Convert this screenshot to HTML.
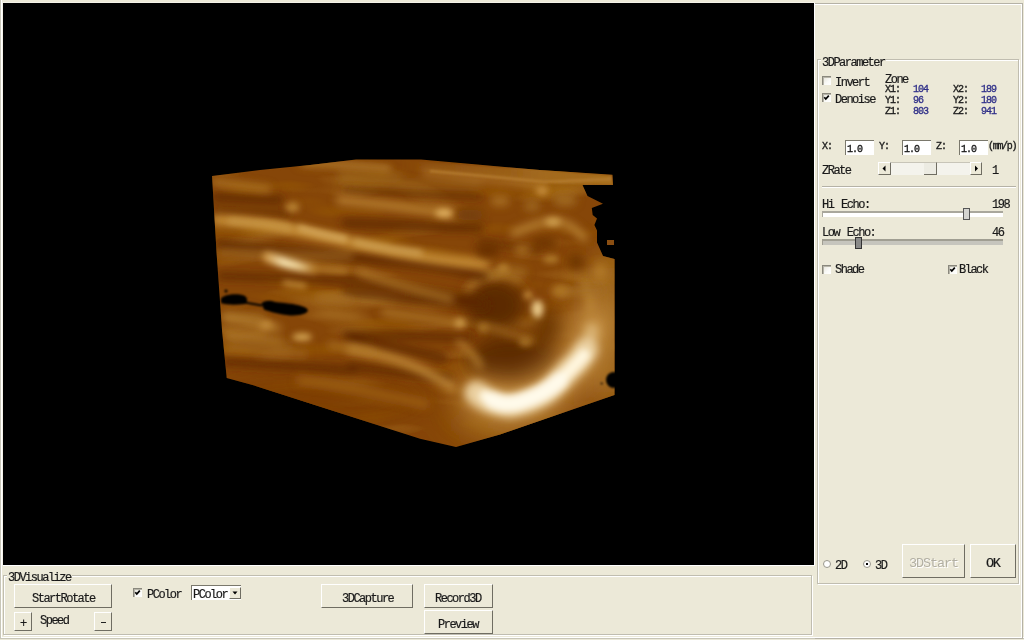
<!DOCTYPE html>
<html><head><meta charset="utf-8">
<style>
*{margin:0;padding:0;box-sizing:border-box}
html,body{width:1024px;height:640px;overflow:hidden;background:#ECE9D8;position:relative}
.a{position:absolute}
.t{position:absolute;font-family:"Liberation Mono",monospace;font-size:12px;line-height:12px;letter-spacing:-1.5px;white-space:nowrap;color:#1a1a1a;-webkit-text-stroke:0.2px #1a1a1a}
.s{position:absolute;font-family:"Liberation Mono",monospace;font-size:10px;line-height:10px;letter-spacing:-1.0px;white-space:nowrap;color:#1a1a1a;-webkit-text-stroke:0.35px #1a1a1a}
.n{color:#2e2e88;-webkit-text-stroke:0.3px #2e2e88}
.btn{position:absolute;background:#ECE9D8;border-top:1px solid #fff;border-left:1px solid #fff;border-right:1px solid #6f6d62;border-bottom:1px solid #6f6d62}
.gb{position:absolute;border:1px solid #c0bdb0;box-shadow:1px 1px 0 #fff inset, 1px 1px 0 #fff}
.gt{background:#ECE9D8;padding:0 1px}
.cb{position:absolute;width:9px;height:9px;background:linear-gradient(135deg,#e4e2d8,#fbfbf8 60%,#fff);border-top:1px solid #8a887d;border-left:1px solid #8a887d;box-shadow:inset 1px 1px 0 #b8b6aa}
.t,.s{will-change:transform}
.tb{position:absolute;background:#fff;border-top:1px solid #7a786c;border-left:1px solid #7a786c}
</style></head><body>
<div class="a" style="left:0;top:0;width:1024px;height:639px;border-left:1px solid #c8c6b8;border-bottom:1px solid #c8c6b8;box-shadow:inset 1px -1px 0 #fff"></div>
<div class="a" style="left:2px;top:2px;width:813px;height:564px;background:#fff;border-top:1px solid #f4f2e8;border-left:1px solid #f4f2e8"></div>
<div class="a" style="left:3px;top:3px;width:811px;height:562px;background:#000;overflow:hidden">
<svg width="811" height="562" viewBox="3 3 811 562" style="position:absolute;left:0;top:0">
<defs>
<clipPath id="cp"><path d="M212,176 L260,170 L310,165 L356,159.4 L421,159.4 L480,164.8 L540,170 L612.5,174.8 L613,185 L582.5,185 L587.5,196 L603,203.7 L591.8,208 L592.7,215 L597,218.4 L594.4,225 L597,230.4 L597,242.5 L603,256 L614.5,259 L614.5,395 L500,434.5 L456,447 L420,438.7 L252.5,385 L226.7,378 L222,330 L216.7,255 Z"/></clipPath>
<filter id="b1" x="-50%" y="-50%" width="200%" height="200%"><feGaussianBlur stdDeviation="1.2"/></filter>
<filter id="b2" x="-50%" y="-50%" width="200%" height="200%"><feGaussianBlur stdDeviation="3"/></filter>
<filter id="b4" x="-50%" y="-50%" width="200%" height="200%"><feGaussianBlur stdDeviation="4.2"/></filter>
<filter id="b8" x="-50%" y="-50%" width="200%" height="200%"><feGaussianBlur stdDeviation="8"/></filter>
<filter id="b14" x="-50%" y="-50%" width="200%" height="200%"><feGaussianBlur stdDeviation="14"/></filter>
<filter id="texL" x="0" y="0" width="100%" height="100%" filterUnits="userSpaceOnUse"><feTurbulence type="fractalNoise" baseFrequency="0.01 0.045" numOctaves="2" seed="7" result="n0"/><feGaussianBlur in="n0" stdDeviation="2" result="n"/><feColorMatrix in="n" type="matrix" values="0 0 0 0 0.74  0 0 0 0 0.46  0 0 0 0 0.08  3 0 0 0 -1.6"/></filter>
<filter id="texD" x="0" y="0" width="100%" height="100%" filterUnits="userSpaceOnUse"><feTurbulence type="fractalNoise" baseFrequency="0.012 0.05" numOctaves="2" seed="11" result="n0"/><feGaussianBlur in="n0" stdDeviation="2" result="n"/><feColorMatrix in="n" type="matrix" values="0 0 0 0 0.36  0 0 0 0 0.13  0 0 0 0 0.0  3 0 0 0 -1.6"/></filter>
<linearGradient id="rib" x1="400" y1="0" x2="613" y2="0" gradientUnits="userSpaceOnUse"><stop offset="0" stop-color="#A26A20" stop-opacity="0"/><stop offset="0.4" stop-color="#A26A20" stop-opacity="0.6"/><stop offset="1" stop-color="#A8701F"/></linearGradient>
<linearGradient id="gD" x1="265" y1="0" x2="316" y2="0" gradientUnits="userSpaceOnUse"><stop offset="0" stop-color="#C89040"/><stop offset="0.35" stop-color="#F6E2B0"/><stop offset="0.6" stop-color="#EED49A"/><stop offset="1" stop-color="#B88030"/></linearGradient>
</defs>
<g clip-path="url(#cp)">
<rect x="200" y="150" width="430" height="310" fill="#864608"/>
<rect x="200" y="150" width="430" height="310" fill="#fff" filter="url(#texL)" opacity="0.4"/>
<rect x="200" y="150" width="430" height="310" fill="#fff" filter="url(#texD)" opacity="0.5"/>
<!-- large soft tonal areas -->
<g filter="url(#b14)">
<rect x="590" y="255" width="40" height="150" fill="#A26A22"/>


<ellipse cx="520" cy="425" rx="70" ry="18" fill="#9A6018"/>
<ellipse cx="320" cy="400" rx="110" ry="22" fill="#7A3C06" opacity="0.8"/>

</g>
<g filter="url(#b8)">
<ellipse cx="495" cy="305" rx="30" ry="26" fill="#5C2A04"/>
<ellipse cx="513" cy="360" rx="46" ry="24" fill="#5C2A04"/>
<ellipse cx="548" cy="330" rx="14" ry="22" fill="#6A3406"/>
</g>
<g filter="url(#b4)" fill="none" stroke-linecap="round">
<path d="M468,290 C475,276 495,270 520,280" stroke="#B07A2C" stroke-width="6"/>
<path d="M482,326 C500,330 520,336 533,341" stroke="#A87024" stroke-width="5"/>
<path d="M585,285 C590,295 592,305 590,312" stroke="#B07A2C" stroke-width="9"/>
</g>
<!-- dark bands -->
<g filter="url(#b4)" fill="none" stroke-linecap="round" stroke="#5C2802">
<path d="M215,197 L280,200" stroke-width="7"/>
<path d="M215,211 L290,214" stroke-width="4"/>
<path d="M220,245 C280,250 340,256 400,262 S460,272 485,276" stroke-width="8"/>
<path d="M345,223 L480,228" stroke-width="7"/>
<path d="M345,190 L480,196" stroke-width="4"/>
<path d="M220,276 L350,280 L480,300" stroke-width="6"/>
<path d="M345,292 L485,306" stroke-width="7"/>
<path d="M345,334 L470,338" stroke-width="6"/>
<path d="M350,340 C380,345 420,352 444,358" stroke-width="7"/>
<path d="M350,366 C380,370 420,375 450,379" stroke-width="6"/>
<path d="M225,362 L355,370" stroke-width="6"/>
<path d="M480,242 L540,250" stroke-width="6" opacity="0.6"/>
</g>
<!-- light streaks -->
<g filter="url(#b4)" fill="none" stroke-linecap="round">
<path d="M214,182 L268,189" stroke="#B07828" stroke-width="6"/>
<path d="M300,164 L387,170" stroke="#A87024" stroke-width="4"/>
<path d="M340,174 L400,176" stroke="#A06C20" stroke-width="4"/>
<path d="M424,172 L545,186" stroke="#C08838" stroke-width="4"/>
<path d="M340,181 L480,186" stroke="#9E6A1E" stroke-width="4"/>
<path d="M216,220 C240,221 267,223.7 298.7,231.6 C320,236 360,244 392,251 S460,262 485,264" stroke="#C89038" stroke-width="10"/>
<path d="M340,200 C370,203 400,206 452,214" stroke="#B88030" stroke-width="8"/>
<path d="M360,272 C380,280 415,290 451,299" stroke="#B07A2C" stroke-width="6"/>
<path d="M384,312 C410,316 440,320 462,324" stroke="#B07A2C" stroke-width="6"/>
<path d="M514,233 C530,226 545,221 553,221 C565,221 575,228 584,238" stroke="#B88236" stroke-width="7"/>
<path d="M225,316 L262,318" stroke="#A87428" stroke-width="6"/>
<path d="M226,334 L265,333" stroke="#B07A2C" stroke-width="5"/>
<path d="M350,349 C380,354 410,362 431,375 C440,380 446,384 452,387" stroke="#C08A3A" stroke-width="8"/>
<path d="M459,343 C470,350 476,358 480,366" stroke="#B88232" stroke-width="6"/>
<path d="M220,253 L350,256" stroke="#9E6820" stroke-width="6"/>
<path d="M319,297 L350,300" stroke="#A87226" stroke-width="5"/>
<path d="M490,277 C500,270 515,268 525,272" stroke="#A87428" stroke-width="5"/>
<path d="M230,342 L290,345" stroke="#A06C22" stroke-width="4"/>
<path d="M560,292 L600,290" stroke="#A06A22" stroke-width="8"/>
</g>
<g filter="url(#b2)">
<ellipse cx="292.5" cy="207.3" rx="7" ry="5" fill="#B88232"/>
<ellipse cx="444" cy="213" rx="9" ry="4" fill="#E0B060"/>
<ellipse cx="542" cy="191" rx="6" ry="4" fill="#C89040"/>
<ellipse cx="553" cy="222" rx="8" ry="4" fill="#D0A050"/>
<path d="M267,257 C278,261 290,265 314,269" stroke="url(#gD)" stroke-width="10" fill="none" stroke-linecap="round"/>
<path d="M310,269 L345,271" stroke="#B07828" stroke-width="5" fill="none" stroke-linecap="round"/>
<path d="M285,283 L304,286" stroke="#C08A3A" stroke-width="5" fill="none" stroke-linecap="round"/>
<ellipse cx="266" cy="325" rx="7" ry="4" fill="#C89040"/>
<ellipse cx="302" cy="337" rx="10" ry="4" fill="#D0A050"/>
<path d="M300,228 C315,233 330,236 345,239" stroke="#D8AC60" stroke-width="6" fill="none" stroke-linecap="round"/>
<path d="M355,242 C375,247 395,250 420,253" stroke="#D0A458" stroke-width="5" fill="none" stroke-linecap="round"/>
<path d="M230,221 C250,222 270,224 290,228" stroke="#C89848" stroke-width="5" fill="none" stroke-linecap="round"/>
<path d="M305,163 C330,163 360,165 390,168" stroke="#B88434" stroke-width="3" fill="none" stroke-linecap="round"/>
<ellipse cx="460" cy="323" rx="5" ry="4" fill="#D0A050"/>
<ellipse cx="537.5" cy="309" rx="6" ry="9" fill="#E8C888"/>
<ellipse cx="528" cy="295" rx="4" ry="4" fill="#C89040"/>
<ellipse cx="503" cy="268" rx="6" ry="4" fill="#B88232"/>
<ellipse cx="551" cy="259" rx="8" ry="4" fill="#B07a2c"/>
<ellipse cx="483" cy="328" rx="5" ry="4" fill="#A87428"/>
<ellipse cx="525" cy="342" rx="6" ry="4" fill="#A87428"/>
</g>
<g filter="url(#b4)">
<ellipse cx="500" cy="201" rx="10" ry="5" fill="#A87024"/>
<ellipse cx="532" cy="206" rx="8" ry="5" fill="#A06A20"/>
<ellipse cx="565" cy="200" rx="12" ry="6" fill="#A06A20"/>
<ellipse cx="600" cy="272" rx="7" ry="9" fill="#B07828"/>
<ellipse cx="560" cy="291" rx="9" ry="6" fill="#B07828"/>
<ellipse cx="522" cy="250" rx="8" ry="5" fill="#A87024"/>
<ellipse cx="595" cy="330" rx="10" ry="14" fill="#B07A2C"/>
<ellipse cx="488" cy="250" rx="12" ry="8" fill="#6A3206"/>
<ellipse cx="545" cy="243" rx="12" ry="6" fill="#6E3606"/>
<ellipse cx="576" cy="262" rx="8" ry="8" fill="#703806"/>
<ellipse cx="470" cy="215" rx="14" ry="6" fill="#744008"/>
</g>
<g filter="url(#b4)" fill="none" stroke-linecap="round">
<path d="M225,318 C240,320 260,324 278,328" stroke="#B88434" stroke-width="6"/>
<path d="M226,335 C245,336 262,338 280,341" stroke="#B07a2c" stroke-width="5"/>
<path d="M226,349 C250,350 280,352 305,354" stroke="#A87024" stroke-width="5"/>
<path d="M300,380 C340,386 380,394 425,404" stroke="#9C5E18" stroke-width="8"/>
<path d="M330,345 C345,347 360,350 372,352" stroke="#B07828" stroke-width="5"/>
</g>
<!-- top ribbon -->
<g filter="url(#b1)">
<path d="M400,160 L612,175 L613,185 L560,184 L400,170Z" fill="url(#rib)"/>
<path d="M430,171 L545,182 L612,179" stroke="#B88032" stroke-width="2.5" fill="none" opacity="0.8"/>
</g>
<!-- bright arc -->
<g filter="url(#b14)" fill="none" stroke-linecap="round">
<path d="M593,320 C590,345 578,368 555,385 C535,400 510,410 478,396" stroke="#C08A40" stroke-width="40"/>
</g>
<g filter="url(#b4)" fill="none" stroke-linecap="round">
<path d="M592,330 C590,342 588,348 586,352" stroke="#D8B070" stroke-width="14"/>
<path d="M586,350 C580,360 575,365 569,370 C560,380 555,386 547,392 C535,400 522,404 510,406 C495,405 485,400 476.5,393" stroke="#EAD0A0" stroke-width="24"/>
</g>
<g filter="url(#b2)" fill="none" stroke-linecap="round">
<path d="M584,355 C578,362 574,366 568,372 C560,380 554,386 546,391 C536,398 524,402 511,404 C500,404 492,401 485,396" stroke="#FFF6DE" stroke-width="12"/>
<path d="M560,380 C552,388 540,396 520,402 C510,405 500,404 492,400" stroke="#FFFAEA" stroke-width="16"/>
</g>
</g>
<!-- holes -->
<g filter="url(#b1)">
<path d="M221,298.5 C224,294.5 236,293 244,295.5 C248,297.5 248,302 245,304 C236,305 226,305 221,303 Z" fill="#000"/>
<path d="M245,302.5 L262,305.5" stroke="#000" stroke-width="2" fill="none"/>
<path d="M261.5,303.5 C264,300.5 270,300 275,302 C285,303 295,304 301,306 C305,307 309,309 307.5,311.5 C305,314.5 298,315.5 290,315.5 C280,314.5 270,312 264,309.5 Z" fill="#000"/>
<circle cx="614" cy="380" r="8" fill="#000"/>
<circle cx="601.7" cy="383.5" r="1" fill="#000"/>
<circle cx="226" cy="291" r="1.5" fill="#000"/>
</g>
<rect x="607" y="240" width="7" height="5" fill="#8A4E12"/>

</svg>
</div>
<div class="gb" style="left:3px;top:575px;width:809px;height:60px"></div>
<div class="t gt" style="left:7.0px;top:572.4px;">3DVisualize</div>
<div class="btn" style="left:14px;top:584px;width:98px;height:24px"></div>
<div class="t" style="left:31.5px;top:592.9px;">StartRotate</div>
<div class="btn" style="left:14px;top:612px;width:18px;height:19px"></div>
<div class="t" style="left:20.0px;top:618.4px;">+</div>
<div class="t" style="left:40.0px;top:614.9px;">Speed</div>
<div class="btn" style="left:94px;top:612px;width:18px;height:19px"></div>
<div class="a" style="left:101px;top:622px;width:5px;height:1px;background:#222"></div>
<div class="cb" style="left:133px;top:588px"><svg width="9" height="9" style="position:absolute;left:-1px;top:-1px"><path d="M2.3,4.2 L3.8,6 L6.8,2.6" stroke="#000" stroke-width="1.7" fill="none"/></svg></div>
<div class="t" style="left:147.0px;top:589.2px;">PColor</div>
<div class="tb" style="left:191px;top:585px;width:50px;height:15px"></div>
<div class="t" style="left:193.0px;top:589.2px;">PColor</div>
<div class="btn" style="left:229px;top:587px;width:12px;height:12px"><svg width="10" height="10" style="position:absolute;left:0;top:0"><path d="M2.5,3.5 L7.5,3.5 L5,6.5Z" fill="#000"/></svg></div>
<div class="btn" style="left:321px;top:584px;width:92px;height:24px"></div>
<div class="t" style="left:342.0px;top:593.4px;">3DCapture</div>
<div class="btn" style="left:424px;top:584px;width:69px;height:24px"></div>
<div class="t" style="left:434.5px;top:593.4px;">Record3D</div>
<div class="btn" style="left:424px;top:610px;width:69px;height:24px"></div>
<div class="t" style="left:437.5px;top:618.7px;">Preview</div>
<div class="a" style="left:815px;top:3px;width:208px;height:636px;border-top:1px solid #b5b2a6;border-right:1px solid #b5b2a6;border-bottom:1px solid #b5b2a6;box-shadow:inset 0 1px 0 #fff, inset -1px 0 0 #fff"></div>
<div class="gb" style="left:817px;top:59px;width:202px;height:525px"></div>
<div class="t gt" style="left:821.0px;top:56.9px;">3DParameter</div>
<div class="cb" style="left:822px;top:76px"></div>
<div class="t" style="left:835.0px;top:76.8px;">Invert</div>
<div class="cb" style="left:822px;top:93px"><svg width="9" height="9" style="position:absolute;left:-1px;top:-1px"><path d="M2.3,4.2 L3.8,6 L6.8,2.6" stroke="#000" stroke-width="1.7" fill="none"/></svg></div>
<div class="t" style="left:835.0px;top:93.8px;">Denoise</div>
<div class="t" style="left:884.5px;top:73.7px;">Zone</div>
<div class="s" style="left:884.5px;top:84.9px;">X1:</div>
<div class="s n" style="left:913.0px;top:84.9px;">104</div>
<div class="s" style="left:953.0px;top:84.9px;">X2:</div>
<div class="s n" style="left:981.0px;top:84.9px;">189</div>
<div class="s" style="left:884.5px;top:96.1px;">Y1:</div>
<div class="s n" style="left:913.0px;top:96.1px;">96</div>
<div class="s" style="left:953.0px;top:96.1px;">Y2:</div>
<div class="s n" style="left:981.0px;top:96.1px;">180</div>
<div class="s" style="left:884.5px;top:107.2px;">Z1:</div>
<div class="s n" style="left:913.0px;top:107.2px;">803</div>
<div class="s" style="left:953.0px;top:107.2px;">Z2:</div>
<div class="s n" style="left:981.0px;top:107.2px;">941</div>
<div class="s" style="left:822.0px;top:141.8px;">X:</div>
<div class="tb" style="left:845px;top:140px;width:29px;height:15px"></div>
<div class="s" style="left:846.5px;top:145.2px;">1.0</div>
<div class="s" style="left:879.0px;top:141.8px;">Y:</div>
<div class="tb" style="left:902px;top:140px;width:29px;height:15px"></div>
<div class="s" style="left:903.5px;top:145.2px;">1.0</div>
<div class="s" style="left:936.0px;top:141.8px;">Z:</div>
<div class="tb" style="left:959px;top:140px;width:29px;height:15px"></div>
<div class="s" style="left:960.5px;top:145.2px;">1.0</div>
<div class="s" style="left:987.5px;top:141.8px;letter-spacing:-1.3px;">(mm/p)</div>
<div class="t" style="left:822.0px;top:165.4px;">ZRate</div>
<div class="a" style="left:878px;top:162px;width:104px;height:13px;background:#f4f3ec;border-top:1px solid #c8c5b8"></div>
<div class="btn" style="left:878px;top:162px;width:13px;height:13px"><svg width="11" height="11" style="position:absolute;left:0;top:0"><path d="M6.5,2.5 L6.5,8.5 L3.5,5.5Z" fill="#000"/></svg></div>
<div class="a" style="left:924px;top:162px;width:13px;height:13px;background:#ecebe2;border-top:1px solid #c8c5b8;border-right:1px solid #6f6d62;border-bottom:1px solid #6f6d62"></div>
<div class="btn" style="left:970px;top:162px;width:12px;height:13px"><svg width="11" height="11" style="position:absolute;left:0;top:0"><path d="M4,2.5 L4,8.5 L7,5.5Z" fill="#000"/></svg></div>
<div class="t" style="left:992.0px;top:165.4px;">1</div>
<div class="a" style="left:822px;top:186px;width:194px;height:2px;border-top:1px solid #b5b2a6;border-bottom:1px solid #fff"></div>
<div class="t" style="left:822.0px;top:198.9px;word-spacing:2px;">Hi Echo:</div>
<div class="t" style="left:992.0px;top:198.9px;">198</div>
<div class="a" style="left:822px;top:211px;width:181px;height:6px;background:#fff;border-top:2px solid #a9a79c;border-left:1px solid #a9a79c"></div>
<div class="a" style="left:963px;top:208px;width:7px;height:12px;background:#d4d4d0;border:1px solid #555"></div>
<div class="t" style="left:822.0px;top:227.4px;word-spacing:2px;">Low Echo:</div>
<div class="t" style="left:992.0px;top:227.4px;">46</div>
<div class="a" style="left:822px;top:239px;width:181px;height:6px;background:#c6c5bd;border-top:2px solid #a09e92;border-left:1px solid #a09e92"></div>
<div class="a" style="left:855px;top:237px;width:7px;height:12px;background:#8a8a88;border:1px solid #333"></div>
<div class="cb" style="left:822px;top:265px"></div>
<div class="t" style="left:835.0px;top:264.1px;">Shade</div>
<div class="cb" style="left:948px;top:265px"><svg width="9" height="9" style="position:absolute;left:-1px;top:-1px"><path d="M2.3,4.2 L3.8,6 L6.8,2.6" stroke="#000" stroke-width="1.7" fill="none"/></svg></div>
<div class="t" style="left:959.0px;top:264.1px;">Black</div>
<div class="a" style="left:823px;top:560px;width:8px;height:8px;border-radius:50%;background:#fff;border:1px solid #9a988d"></div>
<div class="t" style="left:835.0px;top:559.9px;">2D</div>
<div class="a" style="left:863px;top:560px;width:8px;height:8px;border-radius:50%;background:#fff;border:1px solid #9a988d"></div>
<div class="a" style="left:866px;top:563px;width:2px;height:2px;background:#000"></div>
<div class="t" style="left:875.0px;top:559.9px;">3D</div>
<div class="btn" style="left:902px;top:544px;width:63px;height:34px"></div>
<div class="t" style="left:908.5px;top:556.9px;color:#b2afa2;-webkit-text-stroke:0;font-size:13.5px;line-height:13.5px;letter-spacing:-1.1px;text-shadow:1px 1px 0 #fff;">3DStart</div>
<div class="btn" style="left:970px;top:544px;width:46px;height:34px"></div>
<div class="t" style="left:986.0px;top:556.9px;font-size:13.5px;line-height:13.5px;letter-spacing:-1.4px;">OK</div>
</body></html>
